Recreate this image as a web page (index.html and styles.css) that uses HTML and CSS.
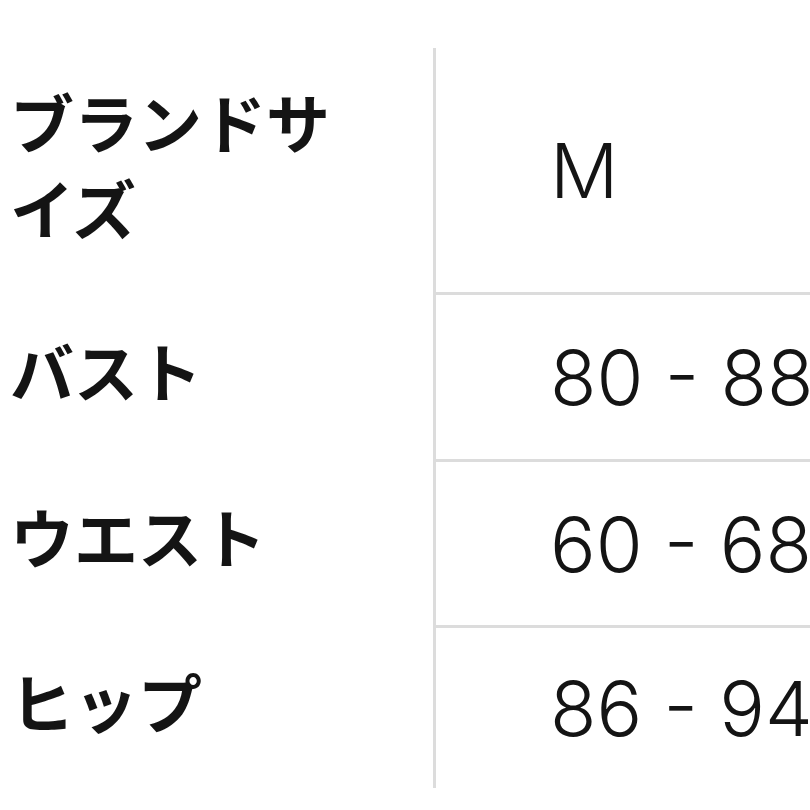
FILE: index.html
```html
<!DOCTYPE html>
<html lang="ja">
<head>
<meta charset="utf-8">
<link rel="stylesheet" href="styles.css">
</head>
<body>
<div class="size-table">
  <div class="label"><span class="label-text">ブランドサイズ</span></div>
  <div class="value first">M</div>
  <div class="label"><span class="label-text">バスト</span></div>
  <div class="value">80 - 88</div>
  <div class="label"><span class="label-text">ウエスト</span></div>
  <div class="value">60 - 68</div>
  <div class="label"><span class="label-text">ヒップ</span></div>
  <div class="value">86 - 94</div>
</div>
</body>
</html>
```

FILE: styles.css
```css
html, body {
  margin: 0;
  padding: 0;
  background: #ffffff;
  width: 810px;
  height: 810px;
  overflow: hidden;
}

.size-table {
  margin-top: 48px;
  display: grid;
  grid-template-columns: 433px 377px;
  grid-template-rows: 244px 167px 166px 163px;
  color: #141414;
}

.label {
  box-sizing: border-box;
  display: flex;
  align-items: center;
  padding-left: 10px;
  padding-bottom: 14px;
  font-family: "Noto Sans CJK JP", "Noto Sans", sans-serif;
  font-weight: 700;
  font-size: 64px;
  line-height: 86px;
}

.label-text {
  max-width: 340px;
}

.value {
  box-sizing: border-box;
  display: flex;
  align-items: center;
  padding-left: 114px;
  border-left: 3px solid #dcdcdc;
  border-top: 3px solid #dcdcdc;
  font-family: Inter, "Liberation Sans", Arial, sans-serif;
  font-weight: 300;
  font-size: 76px;
  line-height: 1;
  white-space: nowrap;
  overflow: hidden;
}

.value.first {
  border-top: none;
}
```
